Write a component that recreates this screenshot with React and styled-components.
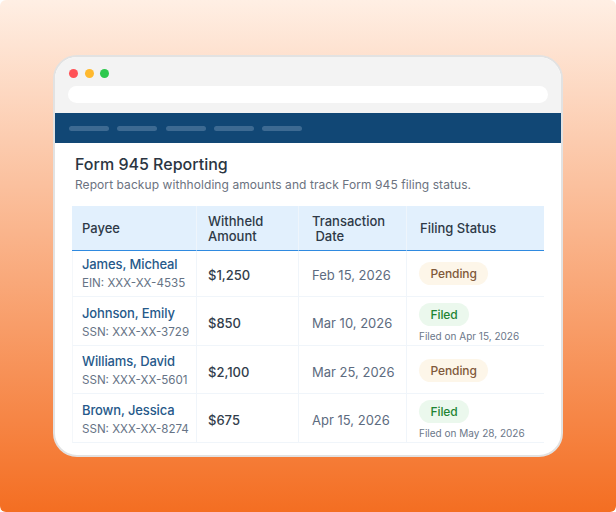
import React from 'react';
import styled, { createGlobalStyle } from 'styled-components';

const GlobalStyle = createGlobalStyle`
  html, body {
    margin: 0;
    padding: 0;
    background: #ffffff;
  }
  body {
    font-family: Inter, "Liberation Sans", sans-serif;
  }
`;

const rows = [
  { name: 'James, Micheal', id: 'EIN: XXX-XX-4535', amount: '$1,250', date: 'Feb 15, 2026', status: 'Pending' },
  { name: 'Johnson, Emily', id: 'SSN: XXX-XX-3729', amount: '$850', date: 'Mar 10, 2026', status: 'Filed', filedOn: 'Filed on Apr 15, 2026' },
  { name: 'Williams, David', id: 'SSN: XXX-XX-5601', amount: '$2,100', date: 'Mar 25, 2026', status: 'Pending' },
  { name: 'Brown, Jessica', id: 'SSN: XXX-XX-8274', amount: '$675', date: 'Apr 15, 2026', status: 'Filed', filedOn: 'Filed on May 28, 2026' },
];

const App = () => (
  <>
    <GlobalStyle />
    <Page>
      <BrowserWindow>
        <Chrome>
          <Dots>
            <Dot color="#ff5257" />
            <Dot color="#ffb92e" />
            <Dot color="#2dc84d" />
          </Dots>
          <AddressBar />
        </Chrome>
        <NavBar>
          {[0, 1, 2, 3, 4].map((i) => <NavItem key={i} />)}
        </NavBar>
        <Content>
          <Title>Form 945 Reporting</Title>
          <Subtitle>Report backup withholding amounts and track Form 945 filing status.</Subtitle>
          <Table>
            <colgroup>
              <col style={{ width: 124 }} />
              <col style={{ width: 102 }} />
              <col style={{ width: 108 }} />
              <col style={{ width: 138 }} />
            </colgroup>
            <thead>
              <tr>
                <HeadCell>Payee</HeadCell>
                <HeadCell>Withheld<br />Amount</HeadCell>
                <HeadCell>Transaction<br />&nbsp;Date</HeadCell>
                <HeadCell>Filing Status</HeadCell>
              </tr>
            </thead>
            <tbody>
              {rows.map((row) => (
                <Row key={row.name}>
                  <Cell>
                    <Name>{row.name}</Name>
                    <TaxId>{row.id}</TaxId>
                  </Cell>
                  <Cell><Amount>{row.amount}</Amount></Cell>
                  <Cell><DateText>{row.date}</DateText></Cell>
                  <Cell>
                    <Badge filed={row.status === 'Filed'}>{row.status}</Badge>
                    {row.filedOn && <FiledOn>{row.filedOn}</FiledOn>}
                  </Cell>
                </Row>
              ))}
            </tbody>
          </Table>
        </Content>
      </BrowserWindow>
    </Page>
  </>
);

export default App;

const Page = styled.div`
  width: 616px;
  height: 512px;
  box-sizing: border-box;
  padding: 55px 53px 0;
  overflow: hidden;
  border-radius: 6px;
  background: linear-gradient(180deg, #ffefe4 0%, #f46e22 100%);
`;

const BrowserWindow = styled.div`
  width: 510px;
  height: 402px;
  box-sizing: border-box;
  border: 2px solid #e2e2e2;
  border-radius: 24px;
  background: #ffffff;
  overflow: hidden;
`;

const Chrome = styled.div`
  height: 56px;
  box-sizing: border-box;
  padding: 12px 13px 0 14px;
  background: #f3f3f3;
`;

const Dots = styled.div`
  display: flex;
  gap: 6.7px;
`;

const Dot = styled.span`
  width: 9px;
  height: 9px;
  border-radius: 50%;
  background: ${(p) => p.color};
`;

const AddressBar = styled.div`
  height: 17px;
  margin: 8px 0 0 -1px;
  border-radius: 9px;
  background: #ffffff;
`;

const NavBar = styled.div`
  display: flex;
  align-items: center;
  gap: 8.3px;
  height: 30px;
  padding-left: 14px;
  background: #114775;
`;

const NavItem = styled.span`
  width: 40px;
  height: 5px;
  border-radius: 3px;
  background: #3d6a92;
`;

const Content = styled.div`
  padding: 11px 17px 0;
`;

const Title = styled.h1`
  margin: 0 0 0 3px;
  font-size: 16px;
  line-height: 20px;
  font-weight: 500;
  color: #2a3542;
`;

const Subtitle = styled.p`
  margin: 3px 0 0 3px;
  font-size: 12px;
  line-height: 16px;
  letter-spacing: 0.07px;
  color: #6b7280;
`;

const Table = styled.table`
  width: 472px;
  margin-top: 13px;
  border-collapse: separate;
  border-spacing: 0;
  table-layout: fixed;
`;

const HeadCell = styled.th`
  height: 45px;
  box-sizing: border-box;
  padding: 1px 0 0 13px;
  background: #e2f0fd;
  border-left: 1px solid #eef5fc;
  border-bottom: 1px solid #2f8ae0;
  font-size: 13px;
  line-height: 15px;
  font-weight: 500;
  text-align: left;
  color: #2e3947;
  &:first-child {
    padding-left: 10px;
    border-left: 0;
  }
  &:nth-child(2) {
    padding-left: 11px;
  }
`;

const Row = styled.tr`
  td {
    height: 48.6px;
    padding-top: 3px;
  }
  &:first-child td {
    height: 46px;
    padding-top: 0;
  }
`;

const Cell = styled.td`
  box-sizing: border-box;
  padding: 0 0 0 12px;
  border-left: 1px solid #f0f5fa;
  border-bottom: 1px solid #f0f5fa;
  vertical-align: middle;
  &:first-child {
    padding-left: 9px;
    border-left: 1px solid #f4f7fa;
  }
  &:nth-child(2) {
    padding-left: 11px;
  }
  &:nth-child(3) {
    padding-left: 13px;
  }
`;

const Name = styled.div`
  font-size: 13px;
  line-height: 16px;
  font-weight: 500;
  letter-spacing: -0.12px;
  color: #26598a;
`;

const TaxId = styled.div`
  margin-top: 4px;
  font-size: 11.6px;
  line-height: 15px;
  color: #667385;
  white-space: nowrap;
`;

const Amount = styled.span`
  font-size: 13px;
  font-weight: 500;
  color: #323d4b;
`;

const DateText = styled.span`
  font-size: 13px;
  color: #5d6b80;
  white-space: nowrap;
`;

const Badge = styled.div`
  width: fit-content;
  height: 23px;
  padding: 0 11.5px;
  border-radius: 12px;
  font-size: 12px;
  font-weight: 500;
  letter-spacing: -0.1px;
  line-height: 23px;
  background: ${(p) => (p.filed ? '#ebf8ed' : '#fdf6e9')};
  color: ${(p) => (p.filed ? '#1f8433' : '#80593a')};
`;

const FiledOn = styled.div`
  margin-top: 4px;
  font-size: 10px;
  line-height: 12px;
  color: #6b7789;
  white-space: nowrap;
`;
